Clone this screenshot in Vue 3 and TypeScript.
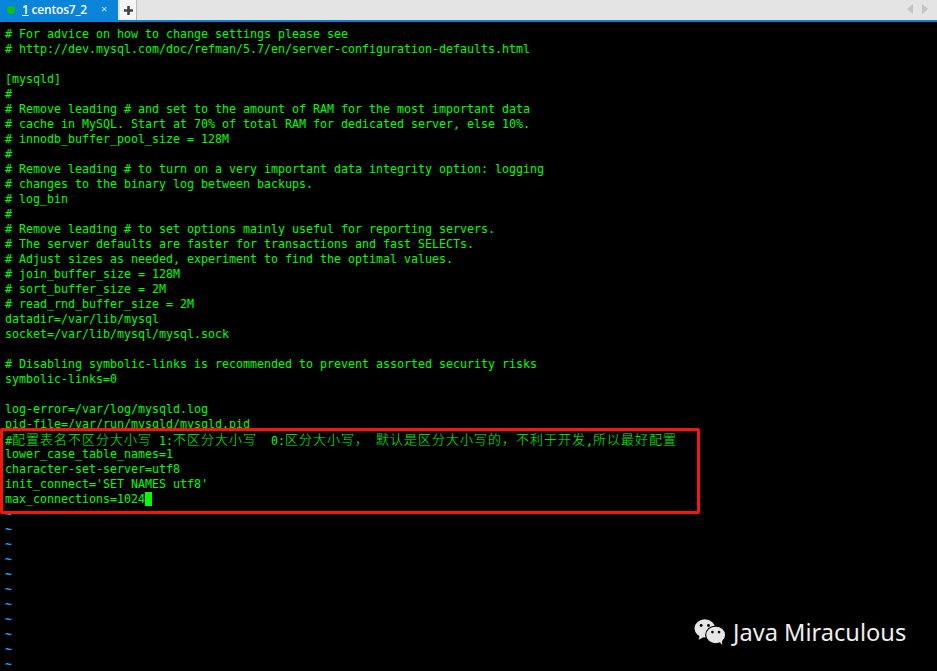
<script setup lang="ts">
interface Seg { text: string; cjk: boolean }

const lines: string[] = [
  '# For advice on how to change settings please see',
  '# http://dev.mysql.com/doc/refman/5.7/en/server-configuration-defaults.html',
  '',
  '[mysqld]',
  '#',
  '# Remove leading # and set to the amount of RAM for the most important data',
  '# cache in MySQL. Start at 70% of total RAM for dedicated server, else 10%.',
  '# innodb_buffer_pool_size = 128M',
  '#',
  '# Remove leading # to turn on a very important data integrity option: logging',
  '# changes to the binary log between backups.',
  '# log_bin',
  '#',
  '# Remove leading # to set options mainly useful for reporting servers.',
  '# The server defaults are faster for transactions and fast SELECTs.',
  '# Adjust sizes as needed, experiment to find the optimal values.',
  '# join_buffer_size = 128M',
  '# sort_buffer_size = 2M',
  '# read_rnd_buffer_size = 2M',
  'datadir=/var/lib/mysql',
  'socket=/var/lib/mysql/mysql.sock',
  '',
  '# Disabling symbolic-links is recommended to prevent assorted security risks',
  'symbolic-links=0',
  '',
  'log-error=/var/log/mysqld.log',
  'pid-file=/var/run/mysqld/mysqld.pid',
  '#配置表名不区分大小写 1:不区分大小写  0:区分大小写， 默认是区分大小写的，不利于开发,所以最好配置',
  'lower_case_table_names=1',
  'character-set-server=utf8',
  "init_connect='SET NAMES utf8'",
]

function split(line: string): Seg[] {
  const parts = line.match(/[\u3000-\u9fff\uff00-\uffef]+|[^\u3000-\u9fff\uff00-\uffef]+/g) ?? []
  return parts.map((text) => ({ text, cjk: /[\u3000-\u9fff\uff00-\uffef]/.test(text) }))
}

const rows = lines.map(split)
const tildes = Array.from({ length: 11 }, (_, i) => i)
</script>

<template>
  <div class="app">
    <header class="bar">
      <div class="tab">
        <span class="dot"></span>
        <span class="title"><u>1</u> centos7_2</span>
        <span class="close">×</span>
      </div>
      <div class="add">
        <svg width="11" height="11" viewBox="0 0 11 11"><path d="M4.2 1h2.6v3.2H10v2.6H6.8V10H4.2V6.8H1V4.2h3.2z" fill="#444" /></svg>
      </div>
      <div class="spacer"></div>
      <div class="arrows">
        <svg width="6" height="10" viewBox="0 0 6 10"><path d="M6 0v10L0 5z" fill="#c4c4c4" /></svg>
        <svg width="6" height="10" viewBox="0 0 6 10"><path d="M0 0v10l6-5z" fill="#c4c4c4" /></svg>
      </div>
    </header>

    <main class="term">
      <div v-for="(row, i) in rows" :key="i" class="line">
        <template v-for="(seg, j) in row" :key="j">
          <span v-if="seg.cjk" class="cjk">{{ seg.text }}</span>
          <template v-else>{{ seg.text }}</template>
        </template>
      </div>
      <div class="line">max_connections=1024<span class="cursor"></span></div>
      <div v-for="t in tildes" :key="'t' + t" class="line tilde">~</div>

      <div class="highlight"></div>

      <div class="mark">
        <svg width="32" height="28" viewBox="0 0 34 29.75">
          <ellipse cx="11.5" cy="11" rx="11" ry="9.6" fill="#e6e6e6" />
          <path d="M6 18l-1 5 6-3z" fill="#e6e6e6" />
          <circle cx="7.6" cy="8" r="1.5" fill="#000" />
          <circle cx="15.4" cy="8" r="1.5" fill="#000" />
          <ellipse cx="23" cy="18" rx="10.6" ry="9.4" fill="#e6e6e6" stroke="#000" stroke-width="1.2" />
          <path d="M27 25l3 4-.4-5.5z" fill="#e6e6e6" />
          <circle cx="19.6" cy="15" r="1.4" fill="#000" />
          <circle cx="26.6" cy="15" r="1.4" fill="#000" />
        </svg>
        <span class="brand">Java Miraculous</span>
      </div>
    </main>
  </div>
</template>

<style>
html, body { margin: 0; background: #000; }
</style>

<style scoped>
.app {
  width: 937px;
  height: 671px;
  display: flex;
  flex-direction: column;
  overflow: hidden;
  background: #000;
}
.bar {
  flex: none;
  height: 20px;
  display: flex;
  align-items: stretch;
  background: #e4e4e4;
  border-bottom: 2px solid #0a84d8;
}
.tab {
  width: 118px;
  display: flex;
  align-items: center;
  background: #0a84d8;
  color: #fff;
  font-family: "Open Sans", sans-serif;
  font-size: 12px;
  font-weight: 600;
  letter-spacing: -0.2px;
  padding: 0 0 2px 7px;
  box-sizing: border-box;
}
.dot {
  width: 8px;
  height: 8px;
  border-radius: 50%;
  background: #0fc00f;
  margin-right: 7px;
  margin-top: 2px;
}
.title { white-space: nowrap; }
.close {
  margin-left: 14px;
  font-size: 11px;
  font-weight: 400;
  color: #cfe6f7;
  margin-top: -2px;
}
.add {
  width: 16px;
  margin-left: 2px;
  background: #f6f6f6;
  border-right: 1px solid #bbb;
  display: flex;
  align-items: center;
  justify-content: center;
}
.spacer { flex: 1; }
.arrows {
  display: flex;
  align-items: center;
  gap: 9px;
  padding-right: 9px;
  padding-bottom: 2px;
}
.term {
  position: relative;
  flex: 1;
  padding: 5px 0 0 5px;
  background: #000;
  color: #0f0;
  font-family: "DejaVu Sans Mono", monospace;
  font-size: 11.63px;
  white-space: pre;
}
.line {
  height: 15px;
  line-height: 15px;
}
.cjk {
  display: inline-block;
  height: 13px;
  font-family: "Noto Sans CJK SC", sans-serif;
  font-size: 13px;
  font-weight: 300;
  letter-spacing: 1px;
  line-height: 13px;
  vertical-align: 1px;
}
.cursor {
  display: inline-block;
  width: 7px;
  height: 14px;
  background: #0f0;
  vertical-align: -3px;
}
.tilde {
  color: #2a9df4;
  font-weight: 700;
}
.highlight {
  position: absolute;
  left: 0;
  top: 406px;
  width: 700px;
  height: 86px;
  box-sizing: border-box;
  border: 3px solid #f5170f;
  border-radius: 2px;
}
.mark {
  position: absolute;
  left: 694px;
  top: 594px;
  display: flex;
  align-items: center;
  gap: 7px;
}
.brand {
  font-family: "Noto Sans", sans-serif;
  font-size: 23.6px;
  color: #eee;
}
</style>
